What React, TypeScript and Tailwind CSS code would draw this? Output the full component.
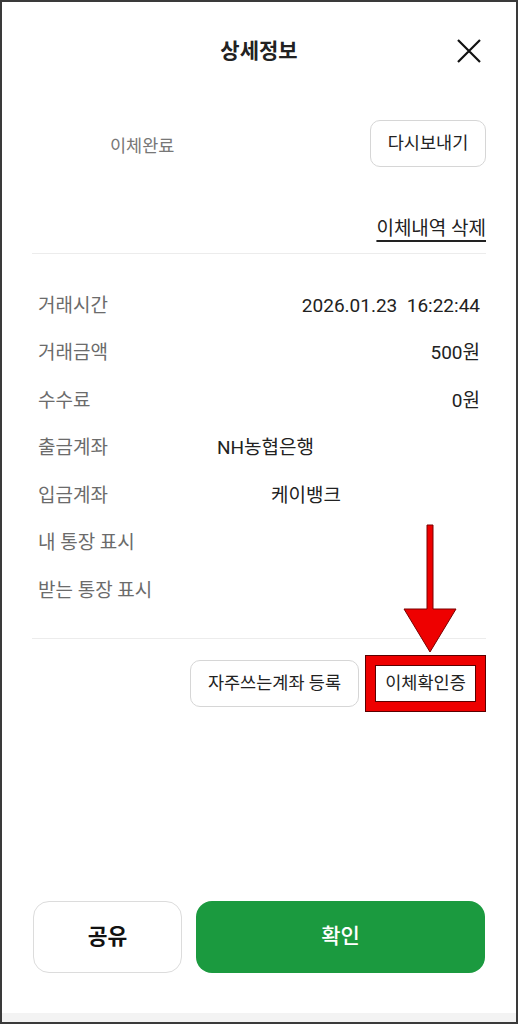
import React from "react"

const font = { fontFamily: "Roboto, 'Noto Sans CJK KR', sans-serif" }

const rows: { label: string; value?: string; align?: "right" | "at"; offset?: string }[] = [
  { label: "거래시간", value: "2026.01.23\u00a0\u00a016:22:44", align: "right" },
  { label: "거래금액", value: "500원", align: "right" },
  { label: "수수료", value: "0원", align: "right" },
  { label: "출금계좌", value: "NH농협은행", align: "at", offset: "pl-[179px]" },
  { label: "입금계좌", value: "케이뱅크", align: "at", offset: "pl-[233px]" },
  { label: "내 통장 표시" },
  { label: "받는 통장 표시" },
]

function Row({ label, value, align, offset }: (typeof rows)[number]) {
  if (align === "at") {
    return (
      <div className="relative flex h-[47.5px] items-center px-[6px]">
        <span className="text-[19px] text-[#6b6b6b]">{label}</span>
        <span className={`absolute left-[6px] text-[19px] text-[#222] ${offset}`}>{value}</span>
      </div>
    )
  }
  return (
    <div className="flex h-[47.5px] items-center justify-between px-[6px]">
      <span className="text-[19px] text-[#6b6b6b]">{label}</span>
      {value && <span className="text-[19px] text-[#222]">{value}</span>}
    </div>
  )
}

export default function App() {
  return (
    <div
      className="relative flex h-[1024px] w-[518px] flex-col overflow-hidden border-2 border-[#3a3a3a] bg-white"
      style={font}
    >
      {/* header */}
      <div className="relative flex h-[96px] items-center justify-center">
        <h1 className="pt-[3px] text-[21px] font-bold text-[#222]">상세정보</h1>
        <button className="absolute right-[34px] top-[36px]" aria-label="닫기">
          <svg width="26" height="26" viewBox="0 0 26 26" fill="none">
            <path d="M2 2L24 24M24 2L2 24" stroke="#111" strokeWidth="2.2" />
          </svg>
        </button>
      </div>

      <div className="ml-[30px] mr-[30px] flex flex-col">
        {/* status */}
        <div className="mt-[22px] flex items-center justify-between">
          <span className="ml-[78px] pt-[6px] text-[17.5px] text-[#777]">이체완료</span>
          <button className="h-[47px] w-[116px] rounded-[10px] border border-[#d6d6d6] text-[17.5px] text-[#222]">
            다시보내기
          </button>
        </div>

        <div className="mt-[50px] flex justify-end">
          <span className="text-[19px] leading-[24px] text-[#222] underline decoration-[1.5px] underline-offset-[5px]">
            이체내역 삭제
          </span>
        </div>

        <div className="mt-[12px] h-px bg-[#ececec]" />

        <div className="mt-[28px] flex flex-col">
          {rows.map((r) => (
            <Row key={r.label} {...r} />
          ))}
        </div>

        <div className="mt-[23px] h-px bg-[#ececec]" />

        <div className="mt-[16px] flex items-center justify-end gap-[6px]">
          <button className="h-[47px] w-[169px] rounded-[10px] border border-[#d6d6d6] text-[17.5px] text-[#222]">
            자주쓰는계좌 등록
          </button>
          <div className="flex h-[57px] w-[121px] items-center justify-center border border-[#5a0000] bg-[#ee0000] p-[9px]">
            <div className="flex h-full w-full items-center justify-center border border-[#5a0000] bg-white text-[17.5px] text-[#222]">
              이체확인증
            </div>
          </div>
        </div>
      </div>

      {/* bottom actions */}
      <div className="mt-auto flex gap-[14px] pl-[31px] pr-[31px]">
        <button className="h-[72px] w-[149px] rounded-[16px] border border-[#dcdcdc] text-[21.5px] font-bold text-[#111]">
          공유
        </button>
        <button className="h-[72px] flex-1 rounded-[16px] bg-[#1b9a3f] text-[21px] font-medium text-white">
          확인
        </button>
      </div>
      <div className="mt-[40px] h-[9px] bg-[#f3f3f3]" />

      {/* annotation arrow */}
      <svg
        className="absolute left-[400px] top-[521px]"
        width="56"
        height="132"
        viewBox="0 0 56 132"
      >
        <path
          d="M25 2H31V86H54L28 129L2 86H25Z"
          fill="#ee0000"
          stroke="#7a0000"
          strokeWidth="1"
        />
      </svg>
    </div>
  )
}
